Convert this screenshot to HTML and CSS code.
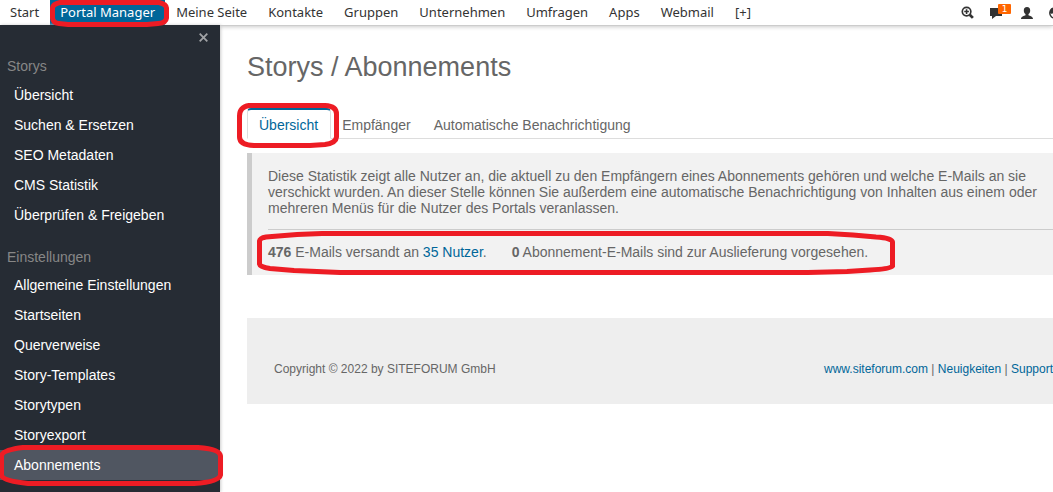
FILE: index.html
```html
<!DOCTYPE html>
<html lang="de">
<head>
<meta charset="utf-8">
<title>Storys / Abonnements</title>
<link rel="stylesheet" href="styles.css">
</head>
<body>
<header class="topbar">
  <nav class="topnav">
    <a href="#">Start</a>
    <a href="#" class="current">Portal Manager</a>
    <a href="#">Meine Seite</a>
    <a href="#">Kontakte</a>
    <a href="#">Gruppen</a>
    <a href="#">Unternehmen</a>
    <a href="#">Umfragen</a>
    <a href="#">Apps</a>
    <a href="#">Webmail</a>
    <a href="#">[+]</a>
  </nav>
  <div class="tools">
    <button class="tool" aria-label="Suche">
      <svg width="13" height="13" viewBox="0 0 14 14" fill="none" stroke="#333"><circle cx="6" cy="6" r="4.6" stroke-width="1.8"/><path d="M9.400 9.400 12.800 12.800" stroke-width="3"/><path d="M6 3.500v5M3.500 6h5" stroke-width="1.700"/></svg>
    </button>
    <button class="tool messages" aria-label="Nachrichten">
      <svg width="13" height="12" viewBox="0 0 13 12" fill="#333"><path d="M0 1h12v8H6l-4 3V9H0z"/></svg>
      <span class="badge">1</span>
    </button>
    <button class="tool" aria-label="Profil">
      <svg width="12" height="12" viewBox="0 0 12 12" fill="#333"><path d="M6 0C8.200 0 9.200 1.400 9.200 3.400 9.200 5 8.500 6.300 7.500 7v1.200c1.300.8 4.500 1 4.500 3.800H0C0 9.200 3.200 9 4.500 8.200V7C3.500 6.300 2.800 5 2.800 3.400 2.800 1.400 3.800 0 6 0z"/></svg>
    </button>
    <button class="tool" aria-label="Sprache">
      <svg width="12" height="12" viewBox="0 0 12 12"><circle cx="6" cy="6" r="5.200" fill="#fff" stroke="#333" stroke-width="1.500"/><path d="M1 3.500 3 1l4-.5 1 2.500-2 2-2 1-1 1-2-1z" fill="#333"/></svg>
    </button>
  </div>
</header>
<div class="layout">
  <aside class="sidebar">
    <button class="close" aria-label="Schließen"><svg width="9" height="9" viewBox="0 0 9 9" stroke="#a0a2a5" stroke-width="1.800"><path d="M.7.7l7.600 7.600M8.300.7.7 8.300"/></svg></button>
    <h2>Storys</h2>
    <ul>
      <li><a href="#">Übersicht</a></li>
      <li><a href="#">Suchen &amp; Ersetzen</a></li>
      <li><a href="#">SEO Metadaten</a></li>
      <li><a href="#">CMS Statistik</a></li>
      <li><a href="#">Überprüfen &amp; Freigeben</a></li>
    </ul>
    <h2>Einstellungen</h2>
    <ul>
      <li><a href="#">Allgemeine Einstellungen</a></li>
      <li><a href="#">Startseiten</a></li>
      <li><a href="#">Querverweise</a></li>
      <li><a href="#">Story-Templates</a></li>
      <li><a href="#">Storytypen</a></li>
      <li><a href="#">Storyexport</a></li>
      <li><a href="#" class="active">Abonnements</a></li>
    </ul>
  </aside>
  <main class="content">
    <h1>Storys / Abonnements</h1>
    <nav class="tabs">
      <a href="#" class="selected">Übersicht</a>
      <a href="#">Empfänger</a>
      <a href="#">Automatische Benachrichtigung</a>
    </nav>
    <section class="info">
      <p>Diese Statistik zeigt alle Nutzer an, die aktuell zu den Empfängern eines Abonnements gehören und welche E-Mails an sie verschickt wurden. An dieser Stelle können Sie außerdem eine automatische Benachrichtigung von Inhalten aus einem oder mehreren Menüs für die Nutzer des Portals veranlassen.</p>
      <div class="stats">
        <span><b>476</b> E-Mails versandt an <a href="#">35 Nutzer</a>.</span>
        <span><b>0</b> Abonnement-E-Mails sind zur Auslieferung vorgesehen.</span>
      </div>
    </section>
    <footer class="footer">
      <span>Copyright © 2022 by SITEFORUM GmbH</span>
      <span class="links"><a href="#">www.siteforum.com</a> | <a href="#">Neuigkeiten</a> | <a href="#">Support</a></span>
    </footer>
  </main>
</div>
<svg class="marks" width="900" height="492" viewBox="0 0 900 492" aria-hidden="true">
  <path d="M52.500 8Q53 4 60 2.500H159Q166 4 166.500 8V18Q166 23 158 23.500L147 24.500H68L59 23.500Q53 23 52.500 18Z"/>
  <path d="M249 105.500H325Q336.500 106 336.500 114V137Q336 143 325 144.500L310 145.500H254Q239.500 145 239.500 137V116Q239.500 107 249 105.500Z"/>
  <path d="M259.500 241Q260 238 266 237L297 234.500 322 233.500H828L853 235 876 237Q892 238 892.500 242V266Q890 269 870 270L847 271.500 808 272.500H340L294 270.500 270 268.500Q260 267 259.500 264Z"/>
  <path d="M1.500 456Q2 450 23 447.500H198Q220 449 220.500 456V475Q219 482 194 483.500H28Q2 481 1.500 475Z"/>
</svg>
</body>
</html>
```
FILE: styles.css
```css
* {
  box-sizing: border-box;
}

body {
  margin: 0;
  min-height: 100vh;
  display: flex;
  flex-direction: column;
  position: relative;
  overflow: hidden;
  background: #fff;
  color: #666;
  font: 14px/16px "Liberation Sans", Arial, sans-serif;
}

a {
  color: #069;
  text-decoration: none;
}

button {
  padding: 0;
  border: 0;
  background: none;
  cursor: pointer;
}

ul {
  margin: 0;
  padding: 0;
  list-style: none;
}

svg {
  display: block;
}

.topbar {
  display: flex;
  justify-content: space-between;
  height: 25px;
  box-shadow: 0 1px 0 #ccc, 0 2px 4px #ccc;
}

.topnav {
  display: flex;
  gap: 1px;
}

.topnav a {
  padding: 0 10px;
  color: #333;
  font: 13px/25px "Noto Sans", sans-serif;
  white-space: nowrap;
}

.topnav .current {
  background: #069;
  color: #fff;
}

.tools {
  display: flex;
  align-items: center;
  gap: 16px;
  margin-right: -8px;
}

.messages {
  position: relative;
  margin-right: 2px;
}

.badge {
  position: absolute;
  left: 8px;
  top: -3px;
  width: 13px;
  border-radius: 1px;
  background: #f60;
  color: #fff;
  font: 9px/10px "DejaVu Sans", sans-serif;
}

.layout {
  display: flex;
  flex: 1;
}

.sidebar {
  display: flex;
  flex-direction: column;
  flex: 0 0 220px;
  z-index: 1;
  background: #262c34;
  box-shadow: 1px 0 3px #ccc;
}

.close {
  align-self: flex-end;
  margin: 8px 12px 0 0;
}

.sidebar h2 {
  margin: 0;
  padding: 16px 7px 6px;
  color: #878787;
  font-size: 14px;
  font-weight: normal;
  line-height: 16px;
}

.sidebar ul + h2 {
  padding-top: 19px;
  padding-bottom: 5px;
}

.sidebar li a {
  display: block;
  padding: 0 14px;
  color: #fff;
  line-height: 30px;
}

.sidebar .active {
  background: #505661;
}

.content {
  flex: 1;
  min-width: 0;
  padding-left: 27px;
}

h1 {
  margin: 27px 0 26px;
  font-size: 27px;
  font-weight: normal;
  line-height: 30px;
}

.tabs {
  display: flex;
  border-bottom: 1px solid #ddd;
}

.tabs a {
  margin-bottom: -1px;
  padding: 7px 11px 5px 10px;
  border: 1px solid transparent;
  border-top-width: 2px;
  color: #666;
}

.tabs .selected {
  padding: 7px 12px 5px 11px;
  border-color: #069 #ddd #fff;
  border-radius: 4px 4px 0 0;
  background: #fff;
  color: #069;
}

.info {
  margin-top: 14px;
  padding: 15px 0 15px 16px;
  border-left: 5px solid #ccc;
  background: #f2f2f2;
}

.info p {
  margin: 0 0 13px;
}

.stats {
  display: flex;
  gap: 25px;
  padding-top: 14px;
  border-top: 1px solid #ccc;
}

.footer {
  display: flex;
  justify-content: space-between;
  margin-top: 43px;
  padding: 43px 0 27px 27px;
  background: #eee;
  font-size: 12px;
}

.marks {
  position: absolute;
  left: 0;
  top: 0;
  z-index: 2;
  fill: none;
  stroke: #ed1c24;
  stroke-width: 5px;
  pointer-events: none;
}
```
